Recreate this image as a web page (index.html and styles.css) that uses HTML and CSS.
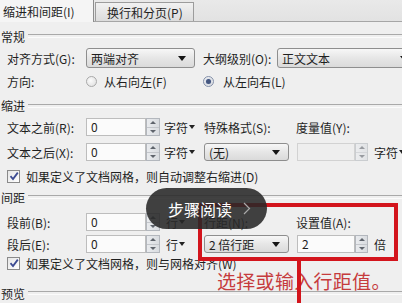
FILE: index.html
```html
<!DOCTYPE html>
<html lang="zh-CN">
<head>
  <meta charset="UTF-8">
  <meta name="viewport" content="width=device-width, initial-scale=1.0">
  <title>段落</title>
  <link rel="stylesheet" href="styles.css">
</head>
<body>
  <div class="dlg">
    <div class="tabs">
      <div class="tab on">缩进和间距(I)</div>
      <div class="tab">换行和分页(P)</div>
    </div>

    <div class="sec s1">常规</div>
    <div class="row r-align">
      <span class="lbl">对齐方式(G):</span>
      <div class="sel sel-a">两端对齐<i class="arr"></i></div>
      <span class="lbl lbl-o">大纲级别(O):</span>
      <div class="sel sel-b">正文文本<i class="arr"></i></div>
    </div>
    <div class="row r-dir">
      <span class="lbl">方向:</span>
      <label class="radio"><i class="dot"></i>从右向左(F)</label>
      <label class="radio on"><i class="dot"></i>从左向右(L)</label>
    </div>

    <div class="sec s2">缩进</div>
    <div class="row">
      <span class="lbl">文本之前(R):</span>
      <div class="num">0</div>
      <span class="spin"><i class="up"></i><i class="dn"></i></span>
      <span class="unit">字符<i class="tri"></i></span>
      <span class="cap">特殊格式(S):</span>
      <span>度量值(Y):</span>
    </div>
    <div class="row r-gap5">
      <span class="lbl">文本之后(X):</span>
      <div class="num">0</div>
      <span class="spin"><i class="up"></i><i class="dn"></i></span>
      <span class="unit">字符<i class="tri"></i></span>
      <div class="sel sel-c">(无)<i class="arr"></i></div>
      <div class="num num-r off"></div>
      <span class="spin spin-r off"><i class="up"></i><i class="dn"></i></span>
      <span class="unit unit-r">字符<i class="tri"></i></span>
    </div>
    <div class="row r-chk">
      <span class="chk"><svg width="10" height="10" viewBox="0 0 10 10"><path d="M1.5 5.2 L4 8 L8.8 1.6" fill="none" stroke="#3c4b92" stroke-width="1.8"/></svg></span>
      如果定义了文档网格，则自动调整右缩进(D)
    </div>

    <div class="sec s3">间距</div>
    <div class="row r-gap4">
      <span class="lbl">段前(B):</span>
      <div class="num">0</div>
      <span class="spin"><i class="up"></i><i class="dn"></i></span>
      <span class="unit unit-h">行<i class="tri"></i></span>
      <span class="cap">行距(N):</span>
      <span>设置值(A):</span>
    </div>
    <div class="row r-gap2">
      <span class="lbl">段后(E):</span>
      <div class="num">0</div>
      <span class="spin"><i class="up"></i><i class="dn"></i></span>
      <span class="unit unit-h">行<i class="tri"></i></span>
      <div class="sel sel-c">2 倍行距<i class="arr"></i></div>
      <div class="num num-r">2</div>
      <span class="spin spin-r"><i class="up"></i><i class="dn"></i></span>
      <span class="unit unit-r">倍</span>
    </div>
    <div class="row r-chk2">
      <span class="chk"><svg width="10" height="10" viewBox="0 0 10 10"><path d="M1.5 5.2 L4 8 L8.8 1.6" fill="none" stroke="#3c4b92" stroke-width="1.8"/></svg></span>
      如果定义了文档网格，则与网格对齐(W)
    </div>

    <div class="sec s4">预览</div>

    <!-- annotations drawn over the dialog -->
    <div class="mark"></div>
    <div class="tip">选择或输入行距值。</div>
    <div class="stem"></div>
    <div class="pill">步骤阅读
      <svg width="8" height="13" viewBox="0 0 8 13"><path d="M1 1 L6.5 6.5 L1 12" fill="none" stroke="#a9a9a9" stroke-width="1.2"/></svg>
    </div>
  </div>
</body>
</html>
```

FILE: styles.css
```css
* {
  box-sizing: border-box;
}
body {
  margin: 0;
  background-color: #efefef;
  font-family: "Noto Sans CJK SC", "Noto Sans", sans-serif;
  font-size: 12px;
  color: #1f1f1f;
}
.dlg {
  position: relative;
  width: 402px;
  height: 303px;
  overflow: hidden;
  background-color: #efefef;
}

/* tabs */
.tabs {
  display: flex;
  align-items: flex-end;
  height: 22px;
  background: linear-gradient(#e9e9e9, #e2e2e2);
  border-bottom: 1px solid #a6a6a6;
}
.tab {
  display: flex;
  align-items: center;
  height: 19px;
  width: 99px;
  margin-left: 1px;
  padding-left: 11px;
  border: 1px solid #9c9c9c;
  border-bottom: none;
  background: linear-gradient(#f1f1f1, #dcdcdc);
}
.tab.on {
  height: 23px;
  width: 94px;
  margin: 0 0 -1px 0;
  padding: 1px 0 0 3px;
  border: none;
  border-right: 1px solid #8d8d8d;
  background: #f5f5f5;
}

/* section titles with rule */
.sec {
  display: flex;
  align-items: center;
  padding-left: 1px;
}
.sec::after {
  content: "";
  flex: 1;
  height: 2px;
  margin-left: 3px;
  border-top: 1px solid #a9a9a9;
  border-bottom: 1px solid #fbfbfb;
}
.s1 { height: 26px; padding-top: 2px; }
.s2 { height: 23px; }
.s3 { height: 22px; }
.s4 { height: 22px; margin-top: 10px; }

/* rows */
.row {
  display: flex;
  align-items: center;
  height: 20px;
  white-space: nowrap;
}
.r-dir { height: 26px; }
.r-gap5 { margin-top: 5px; }
.r-gap4 { margin-top: 4px; }
.r-gap2 { margin-top: 2px; }
.r-chk { margin-top: 4px; padding-left: 7px; }
.r-chk2 { height: 18px; padding-left: 7px; }

.lbl {
  width: 79px;
  margin-left: 7px;
  flex: none;
}
.lbl-o {
  width: 74px;
  margin-left: 8px;
}
.cap {
  width: 92px;
  flex: none;
}

/* dropdowns */
.sel {
  display: flex;
  align-items: center;
  flex: none;
  height: 18px;
  padding: 0 8px 0 4px;
  border: 1px solid #8e8e8e;
  border-radius: 3px;
  background: linear-gradient(#f7f7f7, #e6e6e6 50%, #dadada);
}
.sel-a { width: 109px; height: 20px; }
.sel-b { width: 140px; height: 20px; }
.sel-c { width: 85px; }
.arr {
  margin-left: auto;
  border-left: 4px solid transparent;
  border-right: 4px solid transparent;
  border-top: 5px solid #151515;
}

/* number inputs with spinner */
.num {
  flex: none;
  width: 60px;
  height: 18px;
  padding-left: 4px;
  line-height: 16px;
  border: 1px solid #bdbdbd;
  background: #fbfbfb;
}
.num-r {
  width: 58px;
  margin-left: 8px;
}
.num.off {
  background: #eeeeee;
  border-color: #d2d2d2;
}
.spin {
  display: flex;
  flex-direction: column;
  flex: none;
  width: 14px;
  height: 18px;
  border: 1px solid #b3b7bd;
  background: linear-gradient(90deg, #e9ebee, #d9dce0);
}
.spin-r { width: 13px; }
.spin.off { opacity: 0.6; }
.spin i {
  flex: 1;
  display: flex;
  align-items: center;
  justify-content: center;
}
.spin .up {
  border-bottom: 1px solid #c3c6cb;
}
.spin .up::before,
.spin .dn::before {
  content: "";
  border-left: 3px solid transparent;
  border-right: 3px solid transparent;
}
.spin .up::before { border-bottom: 3px solid #5f646c; }
.spin .dn::before { border-top: 3px solid #5f646c; }

.unit {
  display: flex;
  align-items: center;
  flex: none;
  width: 40px;
  margin-left: 4px;
}
.unit-h {
  width: 38px;
  margin-left: 6px;
}
.unit-r {
  width: auto;
  margin-left: 6px;
}
.tri {
  margin-left: 1px;
  border-left: 3px solid transparent;
  border-right: 3px solid transparent;
  border-top: 4px solid #222;
}

/* radios */
.radio {
  display: flex;
  align-items: center;
  width: 117px;
  flex: none;
}
.dot {
  display: flex;
  align-items: center;
  justify-content: center;
  width: 11px;
  height: 11px;
  margin-right: 7px;
  border: 1px solid #a9a9a9;
  border-radius: 50%;
  background: radial-gradient(circle at 40% 40%, #fbfbfb, #dcdcdc);
}
.radio.on .dot {
  border-color: #8390aa;
  margin-right: 9px;
}
.radio.on .dot::before {
  content: "";
  width: 5px;
  height: 5px;
  border-radius: 50%;
  background: #44567f;
  box-shadow: 0 0 2px #8fa3cc;
}

/* checkbox */
.chk {
  display: flex;
  align-items: center;
  justify-content: center;
  width: 13px;
  height: 13px;
  margin-right: 6px;
  border: 1px solid #8a8a8a;
  background: linear-gradient(135deg, #e6e6e6, #ffffff);
}

/* annotations */
.mark {
  position: absolute;
  left: 198px;
  top: 203px;
  width: 200px;
  height: 58px;
  border: 4px solid #d3141c;
}
.tip {
  position: absolute;
  left: 217px;
  top: 268px;
  font-size: 19px;
  line-height: 26px;
  letter-spacing: 0.3px;
  color: #c63b3d;
  white-space: nowrap;
}
.stem {
  position: absolute;
  left: 297px;
  top: 261px;
  width: 4px;
  height: 42px;
  background: #d3141c;
}
.pill {
  position: absolute;
  left: 146px;
  top: 188px;
  width: 121px;
  height: 41px;
  display: flex;
  align-items: center;
  gap: 11px;
  padding-left: 22px;
  border-radius: 21px;
  background: rgba(40, 40, 40, 0.88);
  color: #ffffff;
  font-size: 16px;
}
```
